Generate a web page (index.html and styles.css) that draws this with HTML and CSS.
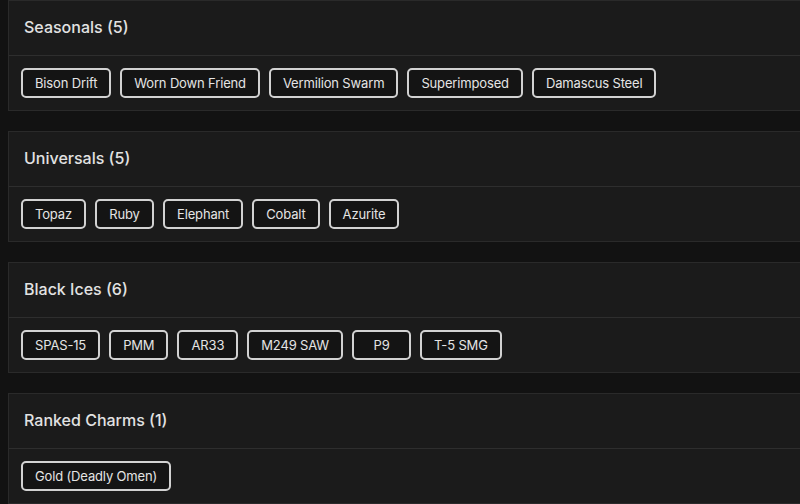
FILE: index.html
```html
<!DOCTYPE html>
<html lang="en">
<head>
    <meta charset="UTF-8">
    <meta name="viewport" content="width=device-width, initial-scale=1.0">
    <title>Charms</title>
    <link rel="stylesheet" href="styles.css">
</head>
<body>
    <div class="list">
        <div class="card">
            <h3 class="card_head">Seasonals (5)</h3>
            <div class="card_body">
                <span class="pill">Bison Drift</span>
                <span class="pill">Worn Down Friend</span>
                <span class="pill">Vermilion Swarm</span>
                <span class="pill">Superimposed</span>
                <span class="pill">Damascus Steel</span>
            </div>
        </div>
        <div class="card">
            <h3 class="card_head">Universals (5)</h3>
            <div class="card_body">
                <span class="pill">Topaz</span>
                <span class="pill">Ruby</span>
                <span class="pill">Elephant</span>
                <span class="pill">Cobalt</span>
                <span class="pill">Azurite</span>
            </div>
        </div>
        <div class="card">
            <h3 class="card_head">Black Ices (6)</h3>
            <div class="card_body">
                <span class="pill">SPAS-15</span>
                <span class="pill">PMM</span>
                <span class="pill">AR33</span>
                <span class="pill">M249 SAW</span>
                <span class="pill">P9</span>
                <span class="pill">T-5 SMG</span>
            </div>
        </div>
        <div class="card">
            <h3 class="card_head">Ranked Charms (1)</h3>
            <div class="card_body">
                <span class="pill">Gold (Deadly Omen)</span>
            </div>
        </div>
    </div>
</body>
</html>
```

FILE: styles.css
```css
* {margin: 0; padding: 0; box-sizing: border-box;}
html, body {background-color: #121212; overflow: hidden;}
body {font-family: "Inter", "Liberation Sans", sans-serif; color: #e2e2e2;}

/* 카드 목록 */
.list {padding-left: 8px; width: 840px;}
.card {background-color: #1b1b1b; border: 1px solid #2a2a2a; margin-bottom: 20px;}
.card_head {height: 55px; line-height: 53px; padding-left: 15px; font-size: 16px; font-weight: 500; border-bottom: 1px solid #2e2e2e;}
.card_body {height: 54px; display: flex; align-items: center; gap: 9px; padding-left: 12px;}

/* 태그 버튼 */
.pill {min-width: 59px; height: 30px; line-height: 26px; padding: 0 12px; font-size: 13px; letter-spacing: -0.15px; text-align: center; border: 2px solid #d2d2d2; border-radius: 5px; background-color: #141414; color: #e4e4e4; white-space: nowrap;}
```
